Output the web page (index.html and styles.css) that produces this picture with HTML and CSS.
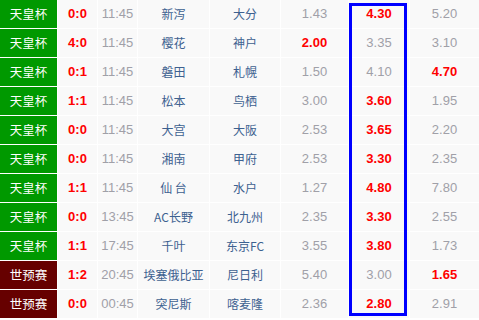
FILE: index.html
```html
<!DOCTYPE html>
<html>
<head>
<meta charset="utf-8">
<link rel="stylesheet" href="styles.css">
</head>
<body>
<div class="board">
  <div class="row"><div class="lg cup">天皇杯</div><div class="sc">0:0</div><div class="tm">11:45</div><div class="team">新泻</div><div class="team">大分</div><div class="od">1.43</div><div class="od hl red">4.30</div><div class="od">5.20</div></div>
  <div class="row"><div class="lg cup">天皇杯</div><div class="sc">4:0</div><div class="tm">11:45</div><div class="team">樱花</div><div class="team">神户</div><div class="od red">2.00</div><div class="od hl">3.35</div><div class="od">3.10</div></div>
  <div class="row"><div class="lg cup">天皇杯</div><div class="sc">0:1</div><div class="tm">11:45</div><div class="team">磐田</div><div class="team">札幌</div><div class="od">1.50</div><div class="od hl">4.10</div><div class="od red">4.70</div></div>
  <div class="row"><div class="lg cup">天皇杯</div><div class="sc">1:1</div><div class="tm">11:45</div><div class="team">松本</div><div class="team">鸟栖</div><div class="od">3.00</div><div class="od hl red">3.60</div><div class="od">1.95</div></div>
  <div class="row"><div class="lg cup">天皇杯</div><div class="sc">0:0</div><div class="tm">11:45</div><div class="team">大宫</div><div class="team">大阪</div><div class="od">2.53</div><div class="od hl red">3.65</div><div class="od">2.20</div></div>
  <div class="row"><div class="lg cup">天皇杯</div><div class="sc">0:0</div><div class="tm">11:45</div><div class="team">湘南</div><div class="team">甲府</div><div class="od">2.53</div><div class="od hl red">3.30</div><div class="od">2.35</div></div>
  <div class="row"><div class="lg cup">天皇杯</div><div class="sc">1:1</div><div class="tm">11:45</div><div class="team">仙 台</div><div class="team">水户</div><div class="od">1.27</div><div class="od hl red">4.80</div><div class="od">7.80</div></div>
  <div class="row"><div class="lg cup">天皇杯</div><div class="sc">0:0</div><div class="tm">13:45</div><div class="team">AC长野</div><div class="team">北九州</div><div class="od">2.35</div><div class="od hl red">3.30</div><div class="od">2.55</div></div>
  <div class="row"><div class="lg cup">天皇杯</div><div class="sc">1:1</div><div class="tm">17:45</div><div class="team">千叶</div><div class="team">东京FC</div><div class="od">3.55</div><div class="od hl red">3.80</div><div class="od">1.73</div></div>
  <div class="row"><div class="lg wcq">世预赛</div><div class="sc">1:2</div><div class="tm">20:45</div><div class="team">埃塞俄比亚</div><div class="team">尼日利</div><div class="od">5.40</div><div class="od hl">3.00</div><div class="od red">1.65</div></div>
  <div class="row"><div class="lg wcq">世预赛</div><div class="sc">0:0</div><div class="tm">00:45</div><div class="team">突尼斯</div><div class="team">喀麦隆</div><div class="od">2.36</div><div class="od hl red">2.80</div><div class="od">2.91</div></div>
  <div class="focus"></div>
</div>
</body>
</html>
```
FILE: styles.css
```css
html, body {
  margin: 0;
  padding: 0;
  background: #ffffff;
}
body {
  font-family: "Liberation Sans", "Noto Sans CJK SC", sans-serif;
  font-size: 12px;
}
.board {
  position: relative;
  width: 479px;
  display: flex;
  flex-direction: column;
  gap: 1px;
}
.row {
  display: grid;
  grid-template-columns: 57px 39px 39px 71px 70px 67px 60px 69px;
  column-gap: 1px;
  height: 28px;
}
.row > div {
  background: #f9f9f9;
  text-align: center;
  line-height: 28px;
  white-space: nowrap;
  overflow: hidden;
}
.row > .lg {
  color: #ffffff;
  font-family: "Noto Sans CJK SC", sans-serif;
  font-size: 12.5px;
}
.row > .cup { background: #009900; }
.row > .wcq { background: #660000; }
.sc {
  color: #ff0000;
  font-weight: bold;
  font-size: 13px;
}
.tm {
  color: #a0a0a8;
  font-size: 13px;
}
.team {
  color: #3d6190;
  font-family: "Noto Sans CJK SC", sans-serif;
  font-size: 12px;
}
.od {
  color: #a0a0a8;
  font-size: 13px;
}
.od.red {
  color: #ff0000;
  font-weight: bold;
}
.focus {
  position: absolute;
  left: 349px;
  top: 3px;
  width: 52px;
  height: 307px;
  border: 3px solid #0000ff;
}
```
